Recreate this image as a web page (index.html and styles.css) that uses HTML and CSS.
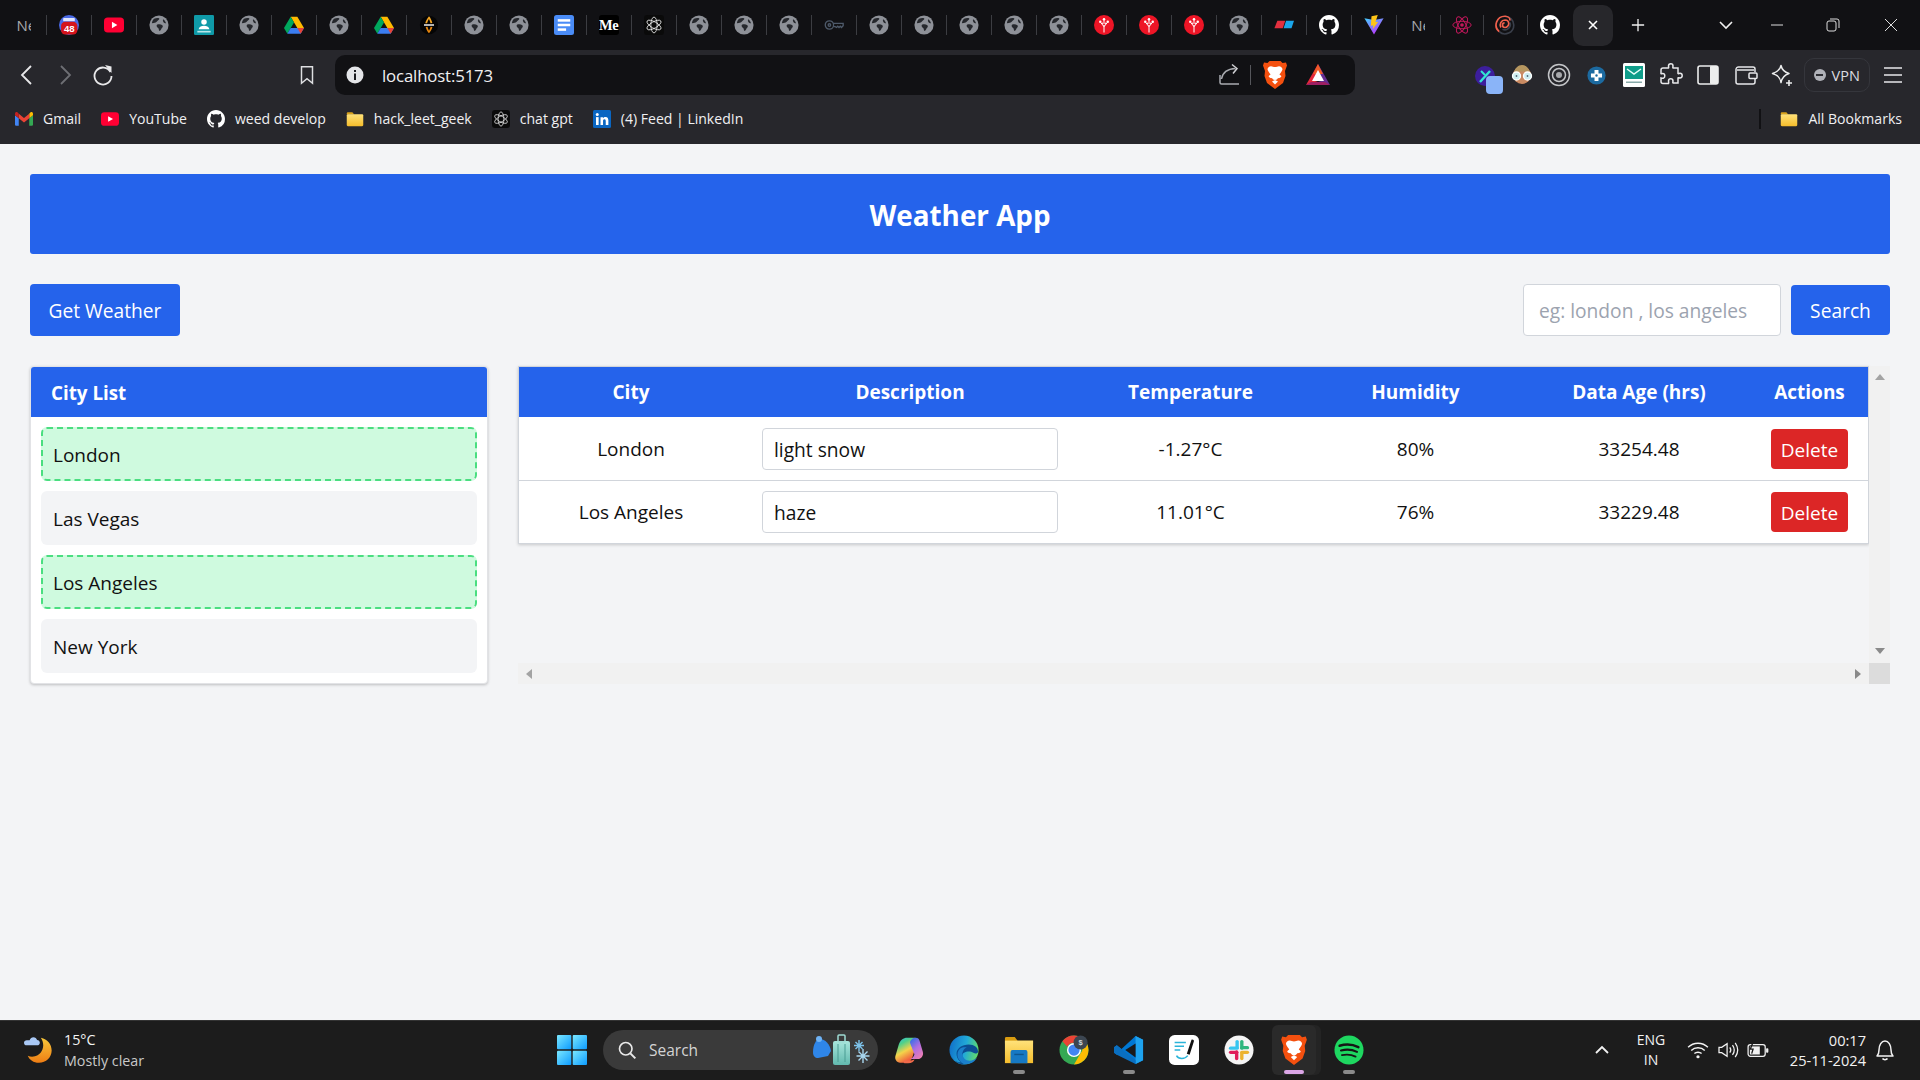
FILE: index.html
```html
<!DOCTYPE html>
<html lang="en">
<head>
<meta charset="utf-8">
<title>Weather App</title>
<link rel="stylesheet" href="styles.css">
</head>
<body>
<svg class="defs" xmlns="http://www.w3.org/2000/svg">
  <defs>
    <linearGradient id="g-vite" x1="0" y1="0" x2="0.6" y2="1"><stop offset="0" stop-color="#41d1ff"/><stop offset="1" stop-color="#bd34fe"/></linearGradient>
    <linearGradient id="g-win" x1="0" y1="0" x2="1" y2="1"><stop offset="0" stop-color="#7be8ff"/><stop offset="1" stop-color="#0c9bff"/></linearGradient>
    <linearGradient id="g-copilot" x1="0" y1="0" x2="0.5" y2="1"><stop offset="0" stop-color="#2bb6f0"/><stop offset="0.3" stop-color="#4fd08a"/><stop offset="0.6" stop-color="#f4d34a"/><stop offset="1" stop-color="#f0503c"/></linearGradient>
    <linearGradient id="g-copilot2" x1="0.2" y1="0" x2="0.8" y2="1"><stop offset="0" stop-color="#2f6fe8"/><stop offset="0.5" stop-color="#b26ee0"/><stop offset="1" stop-color="#f07fb0"/></linearGradient>
    <linearGradient id="g-edge" x1="0" y1="0.3" x2="1" y2="0.5"><stop offset="0" stop-color="#1170c9"/><stop offset="0.55" stop-color="#21a9d8"/><stop offset="1" stop-color="#62dc6a"/></linearGradient>
    <linearGradient id="g-folder" x1="0" y1="0" x2="0" y2="1"><stop offset="0" stop-color="#ffe27a"/><stop offset="1" stop-color="#f5bd2c"/></linearGradient>
    <linearGradient id="g-moon" x1="0" y1="0" x2="0" y2="1"><stop offset="0" stop-color="#f8c83a"/><stop offset="1" stop-color="#ee7d14"/></linearGradient>
    <linearGradient id="g-bag" x1="0" y1="0" x2="0" y2="1"><stop offset="0" stop-color="#a8e6dc"/><stop offset="1" stop-color="#62b9ae"/></linearGradient>

    <symbol id="globe" viewBox="0 0 24 24"><circle cx="12" cy="12" r="11.5" fill="#8e9198"/><path d="M6 4.500c2-.8 4.500-1.200 6-.6 1 .5 0 1.800-1 2.400-1.600 1-1.400 2.400-3 2.600C6.500 9 5 9.800 3.500 10 3.700 8 4.500 5.800 6 4.500zM10 11.500c2-.7 4.500-.5 6 .8 1.200 1 .4 2.500-.6 3.400-.8.800-1 2.600-2.200 3.300-1 .5-1.400-1-1.500-2.200-.1-1.500-2.200-1.700-2.500-3.300-.1-.8.100-1.700.8-2zM17 5c1.700 1.200 3 3 3.500 5-1.200.2-2.400-.4-3-1.300-.6-1-1.200-2.500-.5-3.700z" fill="#26282d"/></symbol>
    <symbol id="cal" viewBox="0 0 24 24"><circle cx="12" cy="12" r="12" fill="#4a6ae6"/><rect x="5" y="3.500" width="14" height="4" rx="1" fill="#dfe6ff"/><rect x="2.500" y="8" width="19.500" height="15.500" rx="5" fill="#d5141c"/><text x="12.300" y="20.800" class="badge-text">48</text></symbol>
    <symbol id="yt" viewBox="0 0 24 18"><rect width="24" height="18" rx="4.500" fill="#ff0033"/><path d="M9.500 5.200 16 9l-6.500 3.800z" fill="#fff"/></symbol>
    <symbol id="contacts" viewBox="0 0 24 24"><rect width="24" height="24" rx="1.500" fill="#0f9aa8"/><circle cx="12" cy="8.500" r="3.300" fill="#fff"/><path d="M5.500 17c.8-3 3.500-4 6.500-4s5.700 1 6.500 4z" fill="#fff"/><rect x="4" y="19" width="16" height="2" fill="#b9e6ea"/></symbol>
    <symbol id="drive" viewBox="0 0 24 22"><path d="M8 1h8l8 13.500h-8z" fill="#ffba00"/><path d="M8 1 0 14.500l4 7L12 8z" fill="#00a85d"/><path d="M4 21.500h16l4-7H8z" fill="#3b7df0"/><path d="M16 14.500 20 21.500l4-7z" fill="#ea4335"/></symbol>
    <symbol id="spark" viewBox="0 0 24 24"><circle cx="12" cy="12" r="11" fill="#050505"/><path d="M7.500 10c.6-3 2.300-6 4.500-8.500 1.800 2 3.200 4.800 4 8l-2.200.4c-.5-2-1-3.400-1.900-5-1 1.500-1.700 3.100-2.200 5z" fill="#f5a623"/><path d="M8 14.500c.8 3 2.200 5.500 4 7.500 2-2.200 3.400-4.700 4.100-7.500l-2.200-.4c-.4 1.800-1 3.300-1.900 4.700-.9-1.400-1.400-2.900-1.800-4.700z" fill="#e8860e"/><rect x="6" y="11" width="12" height="2" fill="#d8d8d8"/></symbol>
    <symbol id="docs" viewBox="0 0 24 24"><rect width="24" height="24" rx="3" fill="#4a8cf7"/><rect x="4.500" y="5" width="15" height="3" fill="#fff"/><rect x="4.500" y="10.500" width="15" height="3" fill="#fff"/><rect x="4.500" y="16" width="10" height="3" fill="#fff"/></symbol>
    <symbol id="gpt" viewBox="0 0 24 24"><rect width="24" height="24" rx="4" fill="#0a0a0a"/><g fill="none" stroke="#e8e8e8" stroke-width="1"><ellipse cx="12" cy="12" rx="3.800" ry="9.500"/><ellipse cx="12" cy="12" rx="3.800" ry="9.500" transform="rotate(60 12 12)"/><ellipse cx="12" cy="12" rx="3.800" ry="9.500" transform="rotate(120 12 12)"/></g></symbol>
    <symbol id="key" viewBox="0 0 24 24"><g fill="none" stroke="#4e5a6a" stroke-width="1.600"><circle cx="6.500" cy="12" r="5"/><circle cx="6.500" cy="12" r="1.500"/><path d="M11.500 10H23v3l-2 2-1.500-1.500-1.500 1.500-1.500-1.500-1.500 1.500-1.500-1H11.500"/></g></symbol>
    <symbol id="redtree" viewBox="0 0 24 24"><circle cx="12" cy="12" r="12" fill="#ee1526"/><g stroke="#fff" stroke-width="1.200" fill="none"><path d="M12 21V12M12 14 8 9M12 14l4-5M12 11V6"/></g><circle cx="12" cy="5" r="1.500" fill="#fff"/><circle cx="7.500" cy="8" r="1.500" fill="#fff"/><circle cx="16.500" cy="8" r="1.500" fill="#fff"/><circle cx="9.800" cy="10" r="1" fill="#fff"/><circle cx="14.200" cy="10" r="1" fill="#fff"/></symbol>
    <symbol id="render" viewBox="0 0 24 24"><path d="M4 7h9.500l-3 9H.5z" fill="#e3303f"/><path d="M14.500 7H24l-3 9h-9.500z" fill="#1aa5ea"/></symbol>
    <symbol id="github" viewBox="0 0 16 16"><path fill="#fff" d="M8 0C3.580 0 0 3.580 0 8c0 3.540 2.290 6.530 5.470 7.590.4.070.55-.17.55-.38 0-.19-.01-.82-.01-1.490-2.010.37-2.530-.49-2.690-.94-.09-.23-.48-.94-.82-1.130-.28-.15-.68-.52-.01-.53.630-.01 1.080.58 1.230.82.720 1.210 1.870.87 2.330.66.070-.52.280-.87.510-1.070-1.780-.2-3.640-.89-3.640-3.950 0-.87.310-1.590.820-2.150-.08-.2-.36-1.020.080-2.120 0 0 .670-.21 2.200.820.640-.18 1.320-.27 2-.27.680 0 1.360.090 2 .270 1.530-1.040 2.200-.82 2.200-.82.440 1.100.160 1.920.080 2.120.510.560.820 1.270.820 2.150 0 3.070-1.870 3.750-3.650 3.950.290.25.540.730.540 1.480 0 1.070-.01 1.930-.01 2.200 0 .21.150.46.550.38A8.013 8.013 0 0016 8c0-4.420-3.580-8-8-8z"/></symbol>
    <symbol id="vite" viewBox="0 0 24 24"><path d="M.5 4 12 23.500 23.500 4 12 6z" fill="url(#g-vite)"/><path d="M16.500 0 9 1.500l-.8 11.500 3-.8-.7 5L17 8l-3.300.7z" fill="#ffc517"/></symbol>
    <symbol id="react" viewBox="0 0 24 24"><g fill="none" stroke="#c2185b" stroke-width="1.200"><ellipse cx="12" cy="12" rx="11" ry="4.500"/><ellipse cx="12" cy="12" rx="11" ry="4.500" transform="rotate(60 12 12)"/><ellipse cx="12" cy="12" rx="11" ry="4.500" transform="rotate(120 12 12)"/></g><circle cx="12" cy="12" r="2.200" fill="#c2185b"/></symbol>
    <symbol id="swirl" viewBox="0 0 24 24"><g fill="none" stroke-width="2"><path d="M12 1.500A10.500 10.500 0 0 1 22.500 12" stroke="#3a3f4a"/><path d="M22.500 12A10.500 10.500 0 0 1 5 20" stroke="#3a3f4a"/><path d="M5 20A10.500 10.500 0 0 1 12 1.500c4 0 6 2.500 6 5" stroke="#f0604d"/><path d="M18 9a6.500 6.500 0 0 1-9 8" stroke="#3a3f4a"/><path d="M7 15a6 6 0 0 1 5-9c3 0 4.500 2 4.500 4.500S14 15 12 15s-3-1.500-3-3 1.300-2.500 2.500-2.500" stroke="#f0604d"/></g></symbol>
    <symbol id="info" viewBox="0 0 18 18"><circle cx="9" cy="9" r="8.500" fill="#e4e5e8"/><rect x="8" y="4" width="2" height="2" fill="#1a1a1e"/><rect x="8" y="7.500" width="2" height="6.500" fill="#1a1a1e"/></symbol>
    <symbol id="share" viewBox="0 0 24 24"><path d="M3 12v7.500a1.500 1.500 0 0 0 1.500 1.500H22M4.500 16c.8-5 4.500-10 14-10.500" fill="none" stroke="#a9abb0" stroke-width="1.500"/><path d="M15 1.500 20 5.500l-4 5" fill="none" stroke="#d0d1d4" stroke-width="1.500"/></symbol>
    <symbol id="brave" viewBox="0 0 24 28"><path d="M6.500 0h11l2 2 3.500-.5 1 3L22 10l.5 5-2.500 7-8 6-8-6-2.500-7 .5-5L0 4.500l1-3L4.500 2z" fill="#f4500f"/><path d="M12 6c-1.500 0-2.500-.8-4-.8-1.800 0-3.500 1.500-3.500 3 0 1 2 4 3 5 .3.800-2 1.200-1.800 2.300.2 1 2.300 2 3.300 1.500.5 1 1.500 2 3 2s2.500-1 3-2c1 .5 3.100-.5 3.300-1.500.2-1.100-2.100-1.500-1.800-2.300 1-1 3-4 3-5 0-1.500-1.700-3-3.500-3C14.500 5.200 13.500 6 12 6z" fill="#fff"/><path d="M9 20.500 12 19l3 1.500-3 3z" fill="#fff"/></symbol>
    <symbol id="bat" viewBox="0 0 24 22"><path d="M12 0 24 21l-12-4z" fill="#662d91"/><path d="M12 0 0 21l12-4z" fill="#e5283a"/><path d="M12 0 17 10H7z" fill="#f05a28"/><path d="M12 6 18 17H6z" fill="#fff"/><path d="M0 21h24l-5-3H5z" fill="#9e1f63"/></symbol>
    <symbol id="face" viewBox="0 0 24 24"><circle cx="12" cy="12" r="9" fill="#c98a62"/><path d="M4 10c1-5 4-8 8-8s7 3 8 8c-5-2-11-2-16 0z" fill="#b59660"/><circle cx="6.500" cy="13" r="4" fill="#cfeef0" stroke="#fff" stroke-width="1.300"/><circle cx="17.500" cy="13" r="4" fill="#cfeef0" stroke="#fff" stroke-width="1.300"/><circle cx="6.500" cy="13" r=".9" fill="#567"/><circle cx="17.500" cy="13" r=".9" fill="#567"/></symbol>
    <symbol id="target" viewBox="0 0 24 24"><g fill="none" stroke="#c4c5c8"><circle cx="12" cy="12" r="10.500" stroke-width="1.500"/><circle cx="12" cy="12" r="6.500" stroke-width="1.500"/></g><circle cx="12" cy="12" r="3" fill="#a7a8ab"/></symbol>
    <symbol id="plusbadge" viewBox="0 0 24 24"><circle cx="12" cy="12" r="11.500" fill="#1c6aa0"/><path d="M9.500 5h5v4.500H19v5h-4.500V19h-5v-4.500H5v-5h4.500z" fill="#fff"/><circle cx="12" cy="12" r="1.500" fill="#1c6aa0"/></symbol>
    <symbol id="mailcard" viewBox="0 0 24 24"><rect x="1" y="0" width="22" height="24" rx="1.500" fill="#fff"/><rect x="3" y="3" width="18" height="13" fill="#0f9d8a"/><path d="M5 6 12 11l7-5" fill="none" stroke="#e7fff9" stroke-width="1.500"/><rect x="4" y="18.500" width="16" height="1.500" fill="#8aa"/></symbol>
    <symbol id="puzzle" viewBox="0 0 24 24"><path d="M9.500 3c0-1.500 1-2.200 2.300-2.200S14 1.800 14 3c0 1-.5 1.500 0 2h5v5.500c.5.500 1-.2 2-.2 1.300 0 2.200 1 2.200 2.300s-1 2.400-2.200 2.400c-1 0-1.500-.5-2-.2V20h-5c-.6-.5 0-1 0-2 0-1.300-1-2.200-2.300-2.200S9.500 17 9.500 18c0 1 .5 1.800 0 2.500H4a2 2 0 0 1-2-2V15c1 .3 1.800.5 2.500.2 1-.5 1.300-1.500 1.300-2.500s-.8-2.200-2.200-2.200c-.8 0-1.100.5-1.600.2V7a2 2 0 0 1 2-2h5.500c.5-.5 0-1 0-2z" fill="none" stroke="#e7e8ea" stroke-width="1.500"/></symbol>
    <symbol id="sidebar" viewBox="0 0 24 24"><rect x="2" y="3" width="20" height="18" rx="2" fill="none" stroke="#eceded" stroke-width="1.600"/><rect x="14" y="3" width="8" height="18" rx="1" fill="#eceded"/></symbol>
    <symbol id="wallet" viewBox="0 0 24 24"><path d="M21 9V6a2 2 0 0 0-2-2H5a2.500 2.500 0 0 0-3 2.500V19a2 2 0 0 0 2 2h15a2 2 0 0 0 2-2v-3" fill="none" stroke="#e7e8ea" stroke-width="1.500"/><path d="M3 7h17" fill="none" stroke="#e7e8ea" stroke-width="1.500"/><rect x="15" y="10" width="8" height="5.500" rx="1" fill="none" stroke="#e7e8ea" stroke-width="1.500"/></symbol>
    <symbol id="sparkle" viewBox="0 0 24 24"><path d="M10 2.500c1 4.500 3 6.500 8 8-4.500 1.500-7 3.500-8 9-1-5.500-3.500-7.500-8.500-9C6.500 9 9 7 10 2.500z" fill="none" stroke="#eceded" stroke-width="1.500" stroke-linejoin="round"/><path d="M18 17v6M15 20h6" stroke="#eceded" stroke-width="1.600"/></symbol>
    <symbol id="gmail" viewBox="0 0 24 18"><path d="M1 18h4V8L0 4v12.500A1.500 1.500 0 0 0 1 18z" fill="#4285f4"/><path d="M19 18h4a1.500 1.500 0 0 0 1-1.500V4l-5 4z" fill="#34a853"/><path d="M19 2v6l5-4V2c0-2-2-3-3.500-1.800z" fill="#fbbc04"/><path d="M5 8V2l7 5.500L19 2v6l-7 5.500z" fill="#ea4335"/><path d="M0 2v2l5 4V2L3.500.2C2 -1 0 0 0 2z" fill="#c5221f"/></symbol>
    <symbol id="folder" viewBox="0 0 24 20"><path d="M1 2.500A1.500 1.500 0 0 1 2.500 1h6l2.500 3H1z" fill="#d9a21a"/><rect x="1" y="3.500" width="22" height="16" rx="1.500" fill="url(#g-folder)"/></symbol>
    <symbol id="linkedin" viewBox="0 0 24 24"><rect width="24" height="24" rx="2" fill="#0a66c2"/><rect x="4" y="9.500" width="3.500" height="10.500" fill="#fff"/><circle cx="5.700" cy="6" r="2" fill="#fff"/><path d="M10 9.500h3.300V11c.7-1.200 2-1.800 3.400-1.800 3 0 3.800 2 3.800 4.800v6H17v-5.300c0-1.300-.3-2.500-1.800-2.500s-1.800 1.200-1.800 2.500V20H10z" fill="#fff"/></symbol>
    <symbol id="moon" viewBox="0 0 32 32"><path d="M18 3c7 1.500 11.500 7 11.500 13.500C29.500 24 23.500 29.500 16 29.500c-6 0-10-3-12-7.500 2 1 4 1.300 6.500 1 6-1 10-6 10-12 0-3-1-5.500-2.500-8z" fill="url(#g-moon)"/><path d="M6 5.500c.6-2 2.300-3.200 4-3.200 2 0 3.500 1.300 3.900 3 1.700 0 3 1.300 3 2.900S15.500 11 14 11H3C1 11 0 9.800 0 8.200 0 6.800 1.200 5.500 3 5.500z" fill="#a9c8f5"/></symbol>
    <symbol id="win" viewBox="0 0 30 30"><rect x="0" y="0" width="14.300" height="14.300" rx="1" fill="url(#g-win)"/><rect x="15.700" y="0" width="14.300" height="14.300" rx="1" fill="url(#g-win)"/><rect x="0" y="15.700" width="14.300" height="14.300" rx="1" fill="url(#g-win)"/><rect x="15.700" y="15.700" width="14.300" height="14.300" rx="1" fill="url(#g-win)"/></symbol>
    <symbol id="search" viewBox="0 0 24 24"><circle cx="10.500" cy="10.500" r="7.500" fill="none" stroke="#e8e8e8" stroke-width="2"/><path d="m16 16 6 6" stroke="#e8e8e8" stroke-width="2.400"/></symbol>
    <symbol id="promo" viewBox="0 0 58 32"><path d="M1 18c0-7 3-13 7-13 5 0 10 5 11 12l-3 5-10 2C3 24 1 22 1 18z" fill="#2f86e8"/><circle cx="7" cy="5" r="3" fill="#6fb3f5"/><rect x="21" y="7" width="17" height="24" rx="2" fill="url(#g-bag)"/><rect x="26" y="1" width="7" height="7" rx="1" fill="none" stroke="#9fdcd4" stroke-width="1.500"/><path d="M26 10v18M33 10v18" stroke="#4b9c92"/><g stroke="#7ec3ea" stroke-width="1.400"><path d="M47 6v11M42 11.500h10M43.500 8l7 7M50.500 8l-7 7"/></g><g stroke="#a7d6ef" stroke-width="1.400"><path d="M51 15v14M44.500 22h13M46.500 17.500l9 9M55.500 17.500l-9 9"/></g></symbol>
    <symbol id="copilot" viewBox="0 0 32 32"><path d="M22 3c2.600 0 3.600 1.800 2.800 4.300l-5 16c-1 3.500-3 6.200-6.800 6.200H6.500c-3.500 0-6-3.300-5-7l3.500-12C6.500 5.500 10 3 14 3z" fill="url(#g-copilot)"/><path d="M17 7.500c1-2.800 3-4.500 6-4.500 3 0 4 1.800 4.500 4l3.300 11c1 4-1.800 7.500-5.300 7.500h-9c3 0 4.600-2.500 5.300-5l-4-10c-.4-1-.5-2-.8-3z" fill="url(#g-copilot2)"/><path d="M11 30c-1-.5-1-1.600 0-3 3 .5 7 .5 11-1-1 2.500-3 4-7 4z" fill="#f06a4a"/></symbol>
    <symbol id="edge" viewBox="0 0 32 32"><circle cx="16" cy="16" r="15.500" fill="url(#g-edge)"/><path d="M31 18c0-5-4-8-10-8-7 0-13 4-13 10 0 6 5 11 11 11-7 2-18-4-18-15 0 10 7 14 13 13 2 0 3-1 3-3-3-2-4-5-1-7 3-2 7-2 10 0 2 1 4 1 5-1z" fill="#0b4e94"/><path d="M15 13c-4 1-6 4-6 8 0 5 4 9 9 10 6 0 10-3 12-7-3 3-7 4-11 3-4-2-6-6-4-10 1-2 2-3 4-4z" fill="#1b7fcb"/></symbol>
    <symbol id="explorer" viewBox="0 0 32 32"><path d="M1 3.500A1.500 1.500 0 0 1 2.500 2h9l3 4H31v3H1z" fill="#d99c10"/><rect x="1" y="6" width="30" height="24" fill="url(#g-folder)"/><path d="M7 18a2 2 0 0 1 2-2h14a2 2 0 0 1 2 2v12H7z" fill="#1679c4"/><rect x="11" y="20" width="10" height="1.500" fill="#0e568f"/></symbol>
    <symbol id="chrome" viewBox="0 0 32 32"><circle cx="16" cy="16" r="15.500" fill="#34a853"/><path d="M16 .5A15.500 15.500 0 0 1 29.400 8.300H16a8 8 0 0 0-7.200 4.300L3.600 6.700A15.500 15.500 0 0 1 16 .5z" fill="#ea4335"/><path d="M29.400 8.300A15.500 15.500 0 0 1 16 31.500l6.700-11.600a8 8 0 0 0 0-11.600z" fill="#fbbc04"/><circle cx="16" cy="16" r="7.500" fill="#fff"/><circle cx="16" cy="16" r="6" fill="#4285f4"/><circle cx="23" cy="8" r="7.500" fill="#3c4651"/><text x="23" y="11" class="s-text">$</text></symbol>
    <symbol id="vscode" viewBox="0 0 32 32"><path d="M23 1 31 5v22l-8 4L8 17l-5 4-3-2v-6l3-2 5 4z" fill="#0078d4"/><path d="M23 1 31 5v22l-8 4V1z" fill="#1ea2ee"/><path d="M23 9 12 16l11 8z" fill="#1a1a1a"/><path d="M0 13 3 11l20 16v4L3 21l-3-2z" fill="#0a6fc0"/></symbol>
    <symbol id="notes" viewBox="0 0 32 32"><rect width="32" height="32" rx="6" fill="#fff"/><path d="M6 8h12M6 12h10M6 16h6" stroke="#2ab4d9" stroke-width="1.600"/><path d="M8 22c2 4 9 4 12 0" fill="none" stroke="#2ab4d9" stroke-width="1.600"/><path d="M24 5c1.500-.5 3 .5 2.500 2L22 21l-3-1z" fill="#111"/></symbol>
    <symbol id="slack" viewBox="0 0 32 32"><circle cx="16" cy="16" r="15.500" fill="#f4f4f4"/><g stroke-width="3.600" stroke-linecap="round"><path d="M14 7v6" stroke="#36c5f0"/><path d="M7 14h7" stroke="#36c5f0"/><path d="M19 7v7" stroke="#2eb67d"/><path d="M19 13.500h6" stroke="#2eb67d"/><path d="M19 25v-6" stroke="#ecb22e"/><path d="M25 18.500h-6" stroke="#ecb22e"/><path d="M13.500 25v-7" stroke="#e01e5a"/><path d="M7 18.500h6.500" stroke="#e01e5a"/></g></symbol>
    <symbol id="spotify" viewBox="0 0 32 32"><circle cx="16" cy="16" r="15.500" fill="#1ed760"/><g fill="none" stroke="#161616" stroke-linecap="round"><path d="M6 11.500c6-1.800 14-1.500 20 1.500" stroke-width="2.600"/><path d="M7.500 16.500c5-1.300 12-1 17 1.500" stroke-width="2.300"/><path d="M8.500 21.500c5-1 10-.7 14.500 1.500" stroke-width="2"/></g></symbol>
    <symbol id="wifi" viewBox="0 0 24 20"><g fill="none" stroke="#f2f2f2" stroke-width="1.600"><path d="M1 7c6-6 16-6 22 0"/><path d="M4.500 10.500c4-4 11-4 15 0"/><path d="M8 14c2-2 6-2 8 0"/></g><circle cx="12" cy="17.500" r="1.800" fill="#f2f2f2"/></symbol>
    <symbol id="speaker" viewBox="0 0 24 20"><path d="M2 7h3l6-4v14l-6-4H2z" fill="none" stroke="#f2f2f2" stroke-width="1.400"/><g fill="none" stroke="#f2f2f2" stroke-width="1.400"><path d="M14 7c1.500 2 1.500 4 0 6"/><path d="M17 4.500c2.500 3.500 2.500 7.500 0 11"/><path d="M20 2c3.500 5 3.500 11 0 16"/></g></symbol>
    <symbol id="battery" viewBox="0 0 24 20"><rect x="1" y="4" width="19" height="13" rx="2.500" fill="none" stroke="#f2f2f2" stroke-width="1.400"/><rect x="3" y="6" width="11" height="9" fill="#f2f2f2"/><rect x="21" y="8" width="2.500" height="5" rx="1" fill="#f2f2f2"/><path d="M7 0 3.500 9h3L5 14" fill="none" stroke="#1c1c1c" stroke-width="1.500"/></symbol>
    <symbol id="bell" viewBox="0 0 24 24"><path d="M4 18c1-1 2-2 2-6 0-5 2.500-9 6-9s6 4 6 9c0 4 1 5 2 6z" fill="none" stroke="#f2f2f2" stroke-width="1.500" stroke-linejoin="round"/><path d="M9.500 20.500c1 1.500 4 1.500 5 0" fill="none" stroke="#f2f2f2" stroke-width="1.500"/></symbol>
  </defs>
</svg>

<header class="chrome">
  <div class="tabstrip">
    <div class="tab first"><span class="clip-n">Ne</span></div>
    <div class="tab"><svg class="ic"><use href="#cal"/></svg></div>
    <div class="tab"><svg class="ic"><use href="#yt"/></svg></div>
    <div class="tab"><svg class="ic"><use href="#globe"/></svg></div>
    <div class="tab"><svg class="ic"><use href="#contacts"/></svg></div>
    <div class="tab"><svg class="ic"><use href="#globe"/></svg></div>
    <div class="tab"><svg class="ic"><use href="#drive"/></svg></div>
    <div class="tab"><svg class="ic"><use href="#globe"/></svg></div>
    <div class="tab"><svg class="ic"><use href="#drive"/></svg></div>
    <div class="tab"><svg class="ic"><use href="#spark"/></svg></div>
    <div class="tab"><svg class="ic"><use href="#globe"/></svg></div>
    <div class="tab"><svg class="ic"><use href="#globe"/></svg></div>
    <div class="tab"><svg class="ic"><use href="#docs"/></svg></div>
    <div class="tab"><span class="medium">Me</span></div>
    <div class="tab"><svg class="ic"><use href="#gpt"/></svg></div>
    <div class="tab"><svg class="ic"><use href="#globe"/></svg></div>
    <div class="tab"><svg class="ic"><use href="#globe"/></svg></div>
    <div class="tab"><svg class="ic"><use href="#globe"/></svg></div>
    <div class="tab"><svg class="ic"><use href="#key"/></svg></div>
    <div class="tab"><svg class="ic"><use href="#globe"/></svg></div>
    <div class="tab"><svg class="ic"><use href="#globe"/></svg></div>
    <div class="tab"><svg class="ic"><use href="#globe"/></svg></div>
    <div class="tab"><svg class="ic"><use href="#globe"/></svg></div>
    <div class="tab"><svg class="ic"><use href="#globe"/></svg></div>
    <div class="tab"><svg class="ic"><use href="#redtree"/></svg></div>
    <div class="tab"><svg class="ic"><use href="#redtree"/></svg></div>
    <div class="tab"><svg class="ic"><use href="#redtree"/></svg></div>
    <div class="tab"><svg class="ic"><use href="#globe"/></svg></div>
    <div class="tab"><svg class="ic"><use href="#render"/></svg></div>
    <div class="tab"><svg class="ic"><use href="#github"/></svg></div>
    <div class="tab"><svg class="ic"><use href="#vite"/></svg></div>
    <div class="tab narrow"><span class="clip-n">Ne</span></div>
    <div class="tab narrow"><svg class="ic"><use href="#react"/></svg></div>
    <div class="tab narrow"><svg class="ic"><use href="#swirl"/></svg></div>
    <div class="tab last"><svg class="ic"><use href="#github"/></svg></div>
    <div class="tab-active"><svg class="glyph-sm" viewBox="0 0 12 12"><path d="M2 2l8 8M10 2l-8 8" stroke="#fff" stroke-width="1.600"/></svg></div>
    <svg class="newtab" viewBox="0 0 16 16"><path d="M8 1v14M1 8h14" stroke="#f0f0f0" stroke-width="1.500"/></svg>
    <svg class="tabmenu" viewBox="0 0 16 16"><path d="M2 5l6 6 6-6" fill="none" stroke="#f0f0f0" stroke-width="1.600"/></svg>
    <div class="winctl"><svg class="glyph-md" viewBox="0 0 14 14"><path d="M1 7h12" stroke="#ddd" stroke-width="1"/></svg></div>
    <div class="winctl"><svg class="glyph-md" viewBox="0 0 14 14"><rect x="1" y="3" width="9" height="10" rx="2" fill="none" stroke="#ddd"/><path d="M4 1h7a2 2 0 0 1 2 2v7" fill="none" stroke="#ddd"/></svg></div>
    <div class="winctl close"><svg class="glyph-md" viewBox="0 0 14 14"><path d="M1 1l12 12M13 1 1 13" stroke="#ddd" stroke-width="1"/></svg></div>
  </div>

  <div class="toolbar">
    <div class="nav">
      <svg class="nav-ic" viewBox="0 0 24 24"><path d="M16 3 7 12l9 9" fill="none" stroke="#e8e8ea" stroke-width="1.800"/></svg>
      <svg class="nav-ic" viewBox="0 0 24 24"><path d="M8 3l9 9-9 9" fill="none" stroke="#6e6f74" stroke-width="1.800"/></svg>
      <svg class="nav-ic" viewBox="0 0 24 24"><path d="M19.500 9A8.500 8.500 0 1 0 20.500 13" fill="none" stroke="#e8e8ea" stroke-width="1.800"/><path d="M14 2l6.500 1.500V10z" fill="#e8e8ea"/></svg>
      <svg class="nav-ic bookmark" viewBox="0 0 24 24"><path d="M6 3h12v18l-6-5-6 5z" fill="none" stroke="#dedfe2" stroke-width="1.600"/></svg>
    </div>
    <div class="omnibox">
      <svg class="info"><use href="#info"/></svg>
      <span class="url">localhost:5173</span>
      <svg class="nav-ic omni-share"><use href="#share"/></svg>
      <span class="omni-sep"></span>
      <svg class="omni-brave"><use href="#brave"/></svg>
      <svg class="omni-bat"><use href="#bat"/></svg>
    </div>
    <div class="extensions">
      <div class="ext ext-x">
        <svg class="nav-ic ext-x-ic" viewBox="0 0 24 24"><circle cx="10" cy="10" r="10" fill="#3c1e9c"/><path d="M5 16 15 5" stroke="#33e6d3" stroke-width="2.400"/><path d="M6 5l4 4" stroke="#33e6d3" stroke-width="2"/></svg>
        <span class="ext-square"></span>
      </div>
      <div class="ext"><svg class="nav-ic"><use href="#face"/></svg></div>
      <div class="ext"><svg class="nav-ic"><use href="#target"/></svg></div>
      <div class="ext"><svg class="ext-small"><use href="#plusbadge"/></svg></div>
      <div class="ext"><svg class="nav-ic"><use href="#mailcard"/></svg></div>
      <div class="ext"><svg class="nav-ic"><use href="#puzzle"/></svg></div>
      <div class="ext"><svg class="nav-ic"><use href="#sidebar"/></svg></div>
      <div class="ext"><svg class="nav-ic"><use href="#wallet"/></svg></div>
      <div class="ext"><svg class="nav-ic"><use href="#sparkle"/></svg></div>
      <div class="vpn"><span class="vpn-dot"></span><span>VPN</span></div>
      <div class="ext"><svg class="nav-ic" viewBox="0 0 24 24"><path d="M3 5h18M3 12h18M3 19h18" stroke="#e8e8ea" stroke-width="1.500"/></svg></div>
    </div>
  </div>

  <nav class="bookmarks">
    <a class="bm"><svg class="bm-ic"><use href="#gmail"/></svg>Gmail</a>
    <a class="bm"><svg class="bm-ic"><use href="#yt"/></svg>YouTube</a>
    <a class="bm"><svg class="bm-ic"><use href="#github"/></svg>weed develop</a>
    <a class="bm"><svg class="bm-ic"><use href="#folder"/></svg>hack_leet_geek</a>
    <a class="bm"><svg class="bm-ic"><use href="#gpt"/></svg>chat gpt</a>
    <a class="bm"><svg class="bm-ic"><use href="#linkedin"/></svg>(4) Feed | LinkedIn</a>
    <span class="bm-sep"></span>
    <a class="bm"><svg class="bm-ic"><use href="#folder"/></svg>All Bookmarks</a>
  </nav>
</header>

<main class="page">
  <h1 class="app-title">Weather App</h1>

  <div class="actions">
    <button class="btn btn-get">Get Weather</button>
    <div class="search-form">
      <input class="field search-field" placeholder="eg: london , los angeles">
      <button class="btn btn-search">Search</button>
    </div>
  </div>

  <div class="content">
    <section class="city-panel">
      <h2 class="panel-head">City List</h2>
      <ul class="city-list">
        <li class="city selected">London</li>
        <li class="city">Las Vegas</li>
        <li class="city selected">Los Angeles</li>
        <li class="city">New York</li>
      </ul>
    </section>

    <section class="table-scroll">
      <div class="table-view">
        <table class="weather">
          <colgroup><col class="c-city"><col class="c-desc"><col class="c-temp"><col class="c-hum"><col class="c-age"><col class="c-act"></colgroup>
          <thead>
            <tr><th>City</th><th>Description</th><th>Temperature</th><th>Humidity</th><th>Data Age (hrs)</th><th>Actions</th></tr>
          </thead>
          <tbody>
            <tr>
              <td>London</td>
              <td><input class="field desc-field" value="light snow"></td>
              <td>-1.27°C</td><td>80%</td><td>33254.48</td>
              <td><button class="btn-delete">Delete</button></td>
            </tr>
            <tr>
              <td>Los Angeles</td>
              <td><input class="field desc-field" value="haze"></td>
              <td>11.01°C</td><td>76%</td><td>33229.48</td>
              <td><button class="btn-delete">Delete</button></td>
            </tr>
          </tbody>
        </table>
      </div>
      <div class="vbar">
        <svg class="arrow" viewBox="0 0 10 6"><path d="M5 0l5 6H0z" fill="#a3a3a3"/></svg>
        <svg class="arrow" viewBox="0 0 10 6"><path d="M5 6 0 0h10z" fill="#8a8a8a"/></svg>
      </div>
      <div class="hbar">
        <svg class="arrow-h" viewBox="0 0 6 10"><path d="M0 5l6-5v10z" fill="#a3a3a3"/></svg>
        <svg class="arrow-h" viewBox="0 0 6 10"><path d="M6 5 0 0v10z" fill="#8a8a8a"/></svg>
      </div>
      <div class="corner"></div>
    </section>
  </div>
</main>

<footer class="taskbar">
  <div class="tb-left">
    <svg class="tb-weather"><use href="#moon"/></svg>
    <div class="tb-wtext"><span class="tb-temp">15°C</span><span class="tb-cond">Mostly clear</span></div>
  </div>
  <div class="tb-center">
    <svg class="tb-win"><use href="#win"/></svg>
    <div class="tb-search">
      <svg class="tb-search-ic"><use href="#search"/></svg>
      <span class="tb-search-text">Search</span>
      <svg class="tb-promo"><use href="#promo"/></svg>
    </div>
    <div class="tb-apps">
      <div class="app"><svg class="app-ic"><use href="#copilot"/></svg></div>
      <div class="app"><svg class="app-ic"><use href="#edge"/></svg></div>
      <div class="app open"><svg class="app-ic"><use href="#explorer"/></svg></div>
      <div class="app"><svg class="app-ic"><use href="#chrome"/></svg></div>
      <div class="app open"><svg class="app-ic"><use href="#vscode"/></svg></div>
      <div class="app"><svg class="app-ic"><use href="#notes"/></svg></div>
      <div class="app"><svg class="app-ic"><use href="#slack"/></svg></div>
      <div class="app active"><svg class="app-ic"><use href="#brave"/></svg></div>
      <div class="app open"><svg class="app-ic"><use href="#spotify"/></svg></div>
    </div>
  </div>
  <div class="tb-right">
    <svg class="tray-chev" viewBox="0 0 16 16"><path d="M2 11l6-6 6 6" fill="none" stroke="#f2f2f2" stroke-width="1.800"/></svg>
    <div class="tray-lang"><span>ENG</span><span>IN</span></div>
    <svg class="tray-ic"><use href="#wifi"/></svg>
    <svg class="tray-ic"><use href="#speaker"/></svg>
    <svg class="tray-ic"><use href="#battery"/></svg>
    <div class="tray-clock"><span>00:17</span><span>25-11-2024</span></div>
    <svg class="tray-bell"><use href="#bell"/></svg>
  </div>
</footer>
</body>
</html>
```

FILE: styles.css
```css
* { box-sizing: border-box; }

html, body { margin: 0; padding: 0; }

body {
  width: 1920px;
  height: 1080px;
  display: flex;
  flex-direction: column;
  overflow: hidden;
  font-family: "Open Sans", "Noto Sans", "Liberation Sans", sans-serif;
  background: #f3f4f6;
  color: #111;
}

.defs { display: block; width: 0; height: 0; overflow: hidden; }
.badge-text { font: 700 11.5px "Liberation Sans", sans-serif; fill: #fff; text-anchor: middle; }
.s-text { font: 700 8px "Liberation Sans", sans-serif; fill: #cfd4d8; text-anchor: middle; }

/* browser chrome */
.chrome { flex: none; color: #e8e8ea; }

.tabstrip {
  height: 50px;
  display: flex;
  align-items: center;
  background: #111114;
}

.tab {
  width: 45px;
  height: 20px;
  display: flex;
  align-items: center;
  justify-content: center;
  border-left: 1px solid #3c3d42;
}
.tab.first { margin-left: 1px; border-left: 0; }
.tab.narrow { width: 43.5px; }
.tab.last { width: 46.5px; }

.ic { width: 20px; height: 20px; display: block; }

.clip-n {
  width: 14px;
  overflow: hidden;
  font: 400 15px "Open Sans", sans-serif;
  color: #a7a8ab;
  white-space: nowrap;
}

.medium {
  width: 20px;
  height: 20px;
  overflow: hidden;
  background: #000;
  border-radius: 3px;
  color: #fff;
  font: 700 14.5px/20px "Liberation Serif", serif;
  letter-spacing: -0.5px;
  white-space: nowrap;
}

.tab-active {
  width: 40px;
  height: 41px;
  display: flex;
  align-items: center;
  justify-content: center;
  background: #27272b;
  border-radius: 10px;
}

.glyph-sm { width: 12px; height: 12px; }
.glyph-md { width: 14px; height: 14px; }
.newtab { width: 14px; height: 14px; margin-left: 18px; }
.tabmenu { width: 16px; height: 16px; margin-left: auto; margin-right: 15px; }

.winctl {
  width: 56px;
  height: 50px;
  display: flex;
  align-items: center;
  justify-content: center;
}
.winctl.close { width: 59px; }

.toolbar {
  height: 45px;
  display: flex;
  align-items: flex-end;
  background: #27272c;
}

.nav {
  width: 335px;
  height: 45px;
  padding: 5px 0 0 15px;
  display: flex;
  align-items: center;
  gap: 14px;
}

.nav-ic { width: 24px; height: 24px; display: block; flex: none; }
.bookmark { margin-left: auto; margin-right: 17px; width: 22px; height: 22px; }

.omnibox {
  width: 1020px;
  height: 40px;
  display: flex;
  align-items: center;
  padding: 0 25px 0 11px;
  background: #111114;
  border-radius: 10px;
}

.info { width: 18px; height: 18px; }
.url { margin-left: 18px; font-size: 16.8px; letter-spacing: -0.15px; color: #f0f0f2; }
.omni-share { margin-left: auto; }
.omni-sep { width: 1px; height: 20px; margin: 0 12px 0 9px; background: #55565b; }
.omni-brave { width: 24px; height: 28px; }
.omni-bat { width: 24px; height: 22px; margin-left: 19px; }

.extensions {
  margin-left: auto;
  height: 45px;
  padding: 5px 13px 0 0;
  display: flex;
  align-items: center;
  gap: 10px;
}

.ext {
  width: 27.3px;
  height: 27px;
  display: flex;
  align-items: center;
  justify-content: center;
}
.ext-x { position: relative; justify-content: flex-end; }
.ext-x-ic { margin: 5px -1px 0 0; }
.ext-square {
  position: absolute;
  right: -5px;
  bottom: -5px;
  width: 17px;
  height: 18px;
  border-radius: 4px;
  background: #8ab4f8;
}
.ext-small { width: 19px; height: 19px; }

.vpn {
  width: 66px;
  height: 34px;
  margin-left: -3px;
  display: flex;
  align-items: center;
  justify-content: center;
  gap: 6px;
  border: 1px solid #35363c;
  border-radius: 10px;
  font-size: 14.5px;
  color: #dcdde0;
}
.vpn-dot {
  width: 12px;
  height: 12px;
  border-radius: 50%;
  background: linear-gradient(#2d2e33, #2d2e33) center / 7px 2px no-repeat, #b0b2b8;
}

.bookmarks {
  height: 49px;
  display: flex;
  align-items: center;
  gap: 20px;
  padding: 0 18px 2px 15px;
  background: #27272c;
  font-size: 14.05px;
  color: #f0f0f2;
}

.bm { display: flex; align-items: center; gap: 10px; white-space: nowrap; }
.bm-ic { width: 18px; height: 18px; flex: none; }
.bm-sep { width: 2px; height: 20px; margin-left: auto; margin-right: -1px; background: #111114; }

/* page */
.page { flex: 1; padding: 30px 30px 0; min-height: 0; }

.app-title {
  height: 80px;
  margin: 0;
  padding-top: 1px;
  display: flex;
  align-items: center;
  justify-content: center;
  background: #2563eb;
  color: #fff;
  border-radius: 3px;
  font-size: 27.8px;
  font-weight: 700;
}

.actions {
  height: 52px;
  margin-top: 30px;
  display: flex;
  align-items: center;
  justify-content: space-between;
}

.btn {
  border: 0;
  border-radius: 4px;
  padding: 1px 0 0;
  background: #2563eb;
  color: #fff;
  font: inherit;
  font-size: 19.2px;
}
.btn-get { width: 150px; height: 52px; }
.btn-search { width: 99px; height: 50px; }

.search-form { display: flex; align-items: center; gap: 10px; }

.field {
  border: 1px solid #d1d5db;
  border-radius: 4px;
  background: #fff;
  color: #111;
  font: inherit;
  font-size: 19.2px;
  outline: 0;
}
.field::placeholder { color: #9ca3af; opacity: 1; }
.search-field { width: 258px; height: 52px; padding: 1px 15px 0; }
.desc-field { display: block; width: 296px; height: 42px; margin: 0 auto; padding: 1px 11px 0; }

.content {
  height: 318px;
  margin-top: 30px;
  display: grid;
  grid-template-columns: 458px 1372px;
  column-gap: 30px;
}

.city-panel {
  background: #fff;
  border: 1px solid #e2e3e6;
  border-radius: 4px;
  box-shadow: 0 1px 3px rgba(0, 0, 0, 0.22);
  overflow: hidden;
}

.panel-head {
  height: 50px;
  margin: 0;
  padding: 1px 20px 0;
  display: flex;
  align-items: center;
  background: #2563eb;
  color: #fff;
  font-size: 18.8px;
  font-weight: 700;
}

.city-list {
  margin: 0;
  padding: 10px;
  list-style: none;
  display: flex;
  flex-direction: column;
  gap: 10px;
}

.city {
  height: 54px;
  padding: 1px 12px 0;
  display: flex;
  align-items: center;
  background: #f3f4f6;
  border-radius: 6px;
  font-size: 19px;
}
.city.selected { background: #cffadf; border: 2px dashed #4ade80; padding: 1px 10px 0; }

.table-scroll {
  display: grid;
  grid-template-columns: 1351px 21px;
  grid-template-rows: 297px 21px;
}

.table-view { min-width: 0; }

.weather {
  width: 1351px;
  border-collapse: separate;
  border-spacing: 0;
  table-layout: fixed;
  background: #fff;
  border: 1px solid #d1d5db;
  box-shadow: 0 1px 3px rgba(0, 0, 0, 0.18);
  font-size: 19px;
}

.c-city { width: 224px; }
.c-desc { width: 334px; }
.c-temp { width: 227px; }
.c-hum { width: 223px; }
.c-age { width: 224px; }
.c-act { width: 117px; }

.weather th {
  height: 50px;
  padding: 0;
  background: #2563eb;
  color: #fff;
  font-weight: 700;
  text-align: center;
}
.weather td { height: 63px; padding: 1px 0 0; text-align: center; }
.weather tbody tr + tr td { border-top: 1px solid #d1d5db; padding-top: 0; }

.btn-delete {
  width: 77px;
  height: 40px;
  display: block;
  margin: 0 auto;
  padding: 1px 0 0;
  border: 0;
  border-radius: 4px;
  background: #dc2626;
  color: #fff;
  font: inherit;
  font-size: 19px;
}

.vbar {
  display: flex;
  flex-direction: column;
  justify-content: space-between;
  align-items: center;
  padding: 8px 0 9px;
  background: #f1f1f1;
}
.arrow { width: 10px; height: 6px; }

.hbar {
  display: flex;
  justify-content: space-between;
  align-items: center;
  padding: 0 8px;
  background: #f1f1f1;
}
.arrow-h { width: 6px; height: 10px; }

.corner { background: #dcdcdc; }

/* taskbar */
.taskbar {
  flex: none;
  height: 60px;
  padding-bottom: 1px;
  display: grid;
  grid-template-columns: 557px auto 1fr;
  align-items: center;
  background: #1c1c1c;
  border-top: 1px solid #333;
  color: #f2f2f2;
}

.tb-left { display: flex; align-items: center; padding-left: 24px; gap: 10px; }
.tb-weather { width: 30px; height: 30px; flex: none; }
.tb-wtext { display: flex; flex-direction: column; font-size: 14.3px; line-height: 21px; }
.tb-temp { color: #f5f5f5; }
.tb-cond { color: #c9c9c9; }

.tb-center { display: flex; align-items: center; }
.tb-win { width: 30px; height: 30px; flex: none; }

.tb-search {
  width: 275px;
  height: 40px;
  margin-left: 16px;
  padding: 0 8px 0 14px;
  display: flex;
  align-items: center;
  background: #3a3a3a;
  border-radius: 20px;
}
.tb-search-ic { width: 20px; height: 20px; flex: none; }
.tb-search-text { margin-left: 12px; font-size: 15.5px; color: #d4d4d4; }
.tb-promo { width: 58px; height: 32px; margin-left: auto; }

.tb-apps { margin-left: 9px; display: flex; gap: 11px; }

.app {
  position: relative;
  width: 44px;
  height: 50px;
  display: flex;
  align-items: center;
  justify-content: center;
  border-radius: 6px;
}
.app-ic { width: 30px; height: 30px; }
.app.open::after,
.app.active::after {
  content: "";
  position: absolute;
  left: 16px;
  bottom: 1px;
  width: 12px;
  height: 4px;
  border-radius: 2px;
  background: #8a8a8a;
}
.app.active { background: #2a2a2a; box-shadow: 5px 0 0 #242424; }
.app.active::after { left: 12px; width: 20px; background: #dba6e6; }

.tb-right { display: flex; align-items: center; padding-right: 23px; }
.tray-chev { width: 16px; height: 16px; margin-left: 223px; flex: none; }
.tray-lang {
  width: 50px;
  margin-left: 16px;
  flex: none;
  display: flex;
  flex-direction: column;
  align-items: center;
  font-size: 14px;
  line-height: 20px;
  white-space: nowrap;
}
.tray-ic { width: 22px; height: 18px; margin-left: 8px; flex: none; }
.tray-lang + .tray-ic { margin-left: 11px; }
.tray-clock {
  margin-left: auto;
  display: flex;
  flex-direction: column;
  align-items: flex-end;
  font-size: 14.6px;
  line-height: 20px;
  white-space: nowrap;
}
.tray-bell { width: 24px; height: 24px; margin-left: 7px; flex: none; }
```
